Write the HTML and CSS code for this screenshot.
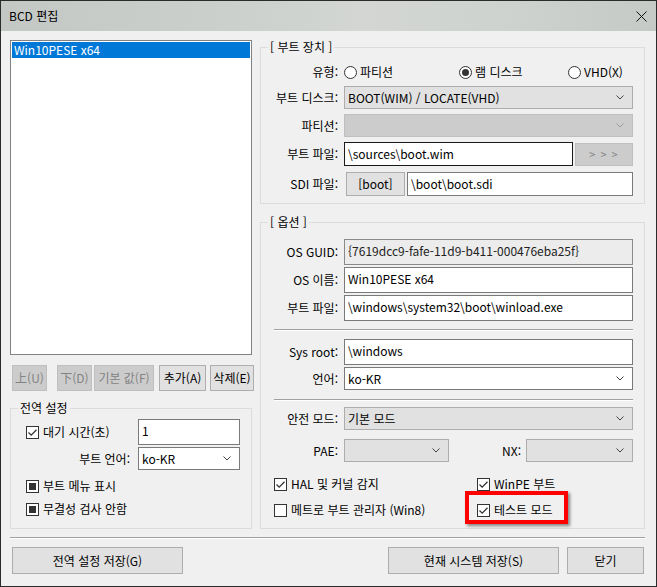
FILE: index.html
```html
<!DOCTYPE html>
<html lang="ko">
<head>
<meta charset="utf-8">
<title>BCD 편집</title>
<link rel="stylesheet" href="styles.css">
</head>
<body>
<div class="window">
  <div class="titlebar">
    <span class="title">BCD 편집</span>
    <svg class="close" width="11" height="11" viewBox="0 0 11 11"><path d="M0.5 0.5 L10.5 10.5 M10.5 0.5 L0.5 10.5"/></svg>
  </div>
  <div class="client">
    <div class="main">
      <div class="leftcol">
        <div class="listbox"><div class="item sel">Win10PESE x64</div></div>
        <div class="btnrow">
          <div class="btn dis b-up">上(U)</div>
          <div class="btn dis b-down">下(D)</div>
          <div class="btn dis b-def">기본 값(F)</div>
          <div class="btn b-add">추가(A)</div>
          <div class="btn b-del">삭제(E)</div>
        </div>
        <fieldset class="group global">
          <legend>전역 설정</legend>
          <div class="grow g1">
            <label class="chk"><span class="cb"><svg viewBox="0 0 11 11" width="11" height="11"><path d="M1.5 5.5 L4.2 8.2 L9.5 2.8"/></svg></span>대기 시간(초)</label>
            <div class="tb small">1</div>
          </div>
          <div class="grow g2">
            <span class="glbl">부트 언어:</span>
            <div class="combo white small"><span>ko-KR</span><svg class="chev" viewBox="0 0 8 5" width="8" height="5"><path d="M0.5 0.5 L4 4 L7.5 0.5"/></svg></div>
          </div>
          <div class="grow g3">
            <label class="chk"><span class="cb ind"><i></i></span>부트 메뉴 표시</label>
          </div>
          <div class="grow g4">
            <label class="chk"><span class="cb ind"><i></i></span>무결성 검사 안함</label>
          </div>
        </fieldset>
      </div>
      <div class="rightcol">
        <fieldset class="group boot">
          <legend>[ 부트 장치 ]</legend>
          <div class="row r-type">
            <span class="lbl">유형:</span>
            <div class="radios">
              <label class="rad"><span class="rb"></span>파티션</label>
              <label class="rad"><span class="rb on"><i></i></span>램 디스크</label>
              <label class="rad"><span class="rb"></span>VHD(X)</label>
            </div>
          </div>
          <div class="row r-disk">
            <span class="lbl">부트 디스크:</span>
            <div class="combo full"><span>BOOT(WIM) / LOCATE(VHD)</span><svg class="chev" viewBox="0 0 8 5" width="8" height="5"><path d="M0.5 0.5 L4 4 L7.5 0.5"/></svg></div>
          </div>
          <div class="row r-part">
            <span class="lbl">파티션:</span>
            <div class="combo full dis"><span></span><svg class="chev" viewBox="0 0 8 5" width="8" height="5"><path d="M0.5 0.5 L4 4 L7.5 0.5"/></svg></div>
          </div>
          <div class="row r-file">
            <span class="lbl">부트 파일:</span>
            <div class="tb focus bootfile">\sources\boot.wim</div>
            <div class="btn dis b-more">&gt; &gt; &gt;</div>
          </div>
          <div class="row r-sdi">
            <span class="lbl">SDI 파일:</span>
            <div class="btn b-boot">[boot]</div>
            <div class="tb sdi">\boot\boot.sdi</div>
          </div>
        </fieldset>
        <fieldset class="group opts">
          <legend>[ 옵션 ]</legend>
          <div class="row o-guid">
            <span class="lbl">OS GUID:</span>
            <div class="tb tall full ro">{7619dcc9-fafe-11d9-b411-000476eba25f}</div>
          </div>
          <div class="row o-name">
            <span class="lbl">OS 이름:</span>
            <div class="tb tall full">Win10PESE x64</div>
          </div>
          <div class="row o-file">
            <span class="lbl">부트 파일:</span>
            <div class="tb tall full">\windows\system32\boot\winload.exe</div>
          </div>
          <div class="hsep s1"></div>
          <div class="row o-root">
            <span class="lbl">Sys root:</span>
            <div class="tb tall full">\windows</div>
          </div>
          <div class="row o-lang">
            <span class="lbl">언어:</span>
            <div class="combo full white"><span>ko-KR</span><svg class="chev" viewBox="0 0 8 5" width="8" height="5"><path d="M0.5 0.5 L4 4 L7.5 0.5"/></svg></div>
          </div>
          <div class="hsep s2"></div>
          <div class="row o-safe">
            <span class="lbl">안전 모드:</span>
            <div class="combo full"><span>기본 모드</span><svg class="chev" viewBox="0 0 8 5" width="8" height="5"><path d="M0.5 0.5 L4 4 L7.5 0.5"/></svg></div>
          </div>
          <div class="row o-pae">
            <span class="lbl">PAE:</span>
            <div class="combo pae"><span></span><svg class="chev" viewBox="0 0 8 5" width="8" height="5"><path d="M0.5 0.5 L4 4 L7.5 0.5"/></svg></div>
            <span class="nxlbl">NX:</span>
            <div class="combo nx"><span></span><svg class="chev" viewBox="0 0 8 5" width="8" height="5"><path d="M0.5 0.5 L4 4 L7.5 0.5"/></svg></div>
          </div>
          <div class="crow c1">
            <label class="chk ccol"><span class="cb"><svg viewBox="0 0 11 11" width="11" height="11"><path d="M1.5 5.5 L4.2 8.2 L9.5 2.8"/></svg></span>HAL 및 커널 감지</label>
            <label class="chk"><span class="cb"><svg viewBox="0 0 11 11" width="11" height="11"><path d="M1.5 5.5 L4.2 8.2 L9.5 2.8"/></svg></span>WinPE 부트</label>
          </div>
          <div class="crow c2">
            <label class="chk ccol"><span class="cb"></span>메트로 부트 관리자 (Win8)</label>
            <label class="chk mark"><span class="cb"><svg viewBox="0 0 11 11" width="11" height="11"><path d="M1.5 5.5 L4.2 8.2 L9.5 2.8"/></svg></span>테스트 모드<span class="redbox"></span></label>
          </div>
        </fieldset>
      </div>
    </div>
    <div class="bsep"></div>
    <div class="bottom">
      <div class="btn bb b-save-g">전역 설정 저장(G)</div>
      <div class="btn bb b-save-s">현재 시스템 저장(S)</div>
      <div class="btn bb b-close">닫기</div>
    </div>
  </div>
</div>
</body>
</html>
```

FILE: styles.css
```css
* { box-sizing: border-box; }
html, body { margin: 0; padding: 0; }
body {
  font-family: "Noto Sans CJK KR", "Malgun Gothic", sans-serif;
  font-size: 12px;
  line-height: 16px;
  color: #000;
  background: #fff;
}
.window {
  width: 657px;
  height: 587px;
  border: 1px solid #2b2b2b;
  background: #f0f0f0;
  display: flex;
  flex-direction: column;
}
.titlebar {
  height: 30px;
  flex: none;
  display: flex;
  align-items: center;
  justify-content: space-between;
  padding: 0 9px 0 8px;
  background: linear-gradient(90deg, #c3c8c5 0%, #cbd0cd 35%, #d3d6d3 55%, #cfd3d0 75%, #c5cac7 100%);
}
.title { font-size: 12px; }
.close path { stroke: #111; stroke-width: 1; fill: none; }

.client {
  flex: 1;
  display: flex;
  flex-direction: column;
  padding: 9px 11px 12px 9px;
}
.main { display: flex; gap: 8px; height: 489px; flex: none; }
.leftcol { width: 242px; display: flex; flex-direction: column; flex: none; }
.rightcol { width: 385px; display: flex; flex-direction: column; flex: none; }

.listbox {
  height: 315px;
  border: 1px solid #828282;
  background: #fff;
  padding: 1px;
  flex: none;
}
.item { height: 16px; line-height: 16px; padding-left: 2px; }
.item.sel { background: #0078d7; color: #fff; }

.btn {
  height: 26px;
  border: 1px solid #adadad;
  background: #e1e1e1;
  color: #000;
  display: flex;
  align-items: center;
  justify-content: center;
  flex: none;
  white-space: nowrap;
}
.btn.dis { background: #cccccc; border-color: #bfbfbf; color: #838383; }

.btnrow { display: flex; margin-top: 10px; height: 26px; flex: none; }
.b-up { width: 35px; margin-left: 2px; }
.b-down { width: 35px; margin-left: 10px; }
.b-def { width: 60px; margin-left: 2px; }
.b-add { width: 47px; margin-left: 5px; }
.b-del { width: 44px; margin-left: 4px; }

.group {
  margin: 0;
  padding: 0;
  border: 1px solid #dcdcdc;
  min-width: 0;
  flex: none;
}
.group legend {
  padding: 0 2px;
  margin-left: 7px;
  line-height: 14px;
}
.global { margin-top: 10px; height: 128px; padding: 0; }
.boot { height: 164px; padding: 0 11px 0 0; }
.opts { margin-top: 11px; height: 314px; padding: 0 11px 0 0; }

/* global group */
.grow { display: flex; align-items: center; padding: 0 11px 0 15px; }
.g1 { margin-top: 4px; justify-content: space-between; }
.g2 { margin-top: 2px; justify-content: flex-end; }
.g3 { margin-top: 8px; height: 16px; }
.g4 { margin-top: 7px; height: 16px; }
.glbl { margin-right: 8px; }
.tb.small { width: 102px; height: 26px; align-items: flex-start; padding-top: 3px; }
.combo.small { width: 102px; }

/* checkbox / radio */
.chk { display: flex; align-items: center; white-space: nowrap; }
.cb {
  width: 13px; height: 13px;
  border: 1px solid #333;
  background: #fff;
  margin-right: 4px;
  flex: none;
  display: flex;
  align-items: center;
  justify-content: center;
}
.cb svg path { fill: none; stroke: #333; stroke-width: 1.3; }
.cb.ind i { display: block; width: 7px; height: 7px; background: #333; }
.radios { display: grid; grid-template-columns: 115px 109px 1fr; width: 289px; }
.rad { display: flex; align-items: center; white-space: nowrap; }
.rb {
  width: 13px; height: 13px;
  border: 1px solid #333;
  border-radius: 50%;
  background: #fff;
  margin-right: 3px;
  flex: none;
  display: flex;
  align-items: center;
  justify-content: center;
}
.rb.on i { display: block; width: 7px; height: 7px; border-radius: 50%; background: #333; }

/* rows */
.row { display: flex; align-items: center; }
.lbl { width: 77px; margin-right: 6px; text-align: right; flex: none; white-space: nowrap; }
.r-type { margin-top: 8px; height: 20px; }
.r-disk { margin-top: 4px; }
.r-part { margin-top: 5px; }
.r-file { margin-top: 5px; }
.r-sdi { margin-top: 6px; }

.combo {
  height: 23px;
  border: 1px solid #adadad;
  background: #e1e1e1;
  display: flex;
  align-items: center;
  justify-content: space-between;
  padding: 0 8px 0 3px;
  flex: none;
}
.combo.full { width: 289px; }
.combo.white { background: #fff; border-color: #7a7a7a; }
.combo.dis { background: #cccccc; border-color: #bfbfbf; }
.chev path { fill: none; stroke: #444; stroke-width: 1; }
.combo.dis .chev path { stroke: #9a9a9a; }

.tb {
  height: 24px;
  border: 1px solid #7a7a7a;
  background: #fff;
  display: flex;
  align-items: center;
  padding: 0 3px;
  flex: none;
  white-space: nowrap;
}
.tb.focus { border-color: #1a1a1a; }
.bootfile { width: 229px; }
.b-more { width: 58px; height: 23px; margin-left: 2px; font-size: 11px; letter-spacing: 1px; }
.b-boot { width: 59px; height: 24px; margin-left: 2px; }
.sdi { width: 226px; margin-left: 2px; }

.tb.tall { height: 26px; align-items: flex-start; padding-top: 3px; }
.tb.full { width: 289px; }
.tb.ro { background: #ececec; border-color: #8a8a8a; color: #222; }

.o-guid { margin-top: 10px; }
.o-name { margin-top: 2px; }
.o-file { margin-top: 2px; }
.hsep { margin-left: 13px; width: 359px; height: 2px; border-top: 1px solid #a0a0a0; border-bottom: 1px solid #fff; }
.s1 { margin-top: 8px; }
.o-root { margin-top: 8px; }
.o-lang { margin-top: 2px; }
.s2 { margin-top: 9px; }
.o-safe { margin-top: 6px; }
.o-pae { margin-top: 9px; }
.combo.pae { width: 105px; }
.nxlbl { width: 77px; text-align: right; padding-right: 5px; flex: none; }
.combo.nx { width: 107px; }

.crow { display: flex; align-items: center; height: 16px; padding-left: 13px; }
.c1 { margin-top: 14px; }
.c2 { margin-top: 10px; }
.ccol { width: 203px; }
.mark { position: relative; }
.redbox {
  position: absolute;
  left: -12px;
  top: -11px;
  width: 103px;
  height: 33px;
  border: 4px solid #ff0000;
  box-shadow: 2px 2px 3px rgba(0, 0, 0, 0.45);
}

/* bottom */
.bsep { margin-top: 8px; height: 2px; border-top: 1px solid #a0a0a0; border-bottom: 1px solid #fff; flex: none; }
.bottom { display: flex; margin-top: 8px; flex: none; }
.bb { height: 27px; }
.b-save-g { width: 171px; margin-left: 2px; }
.b-save-s { width: 171px; margin-left: auto; }
.b-close { width: 77px; margin-left: 8px; margin-right: 1px; }
```
